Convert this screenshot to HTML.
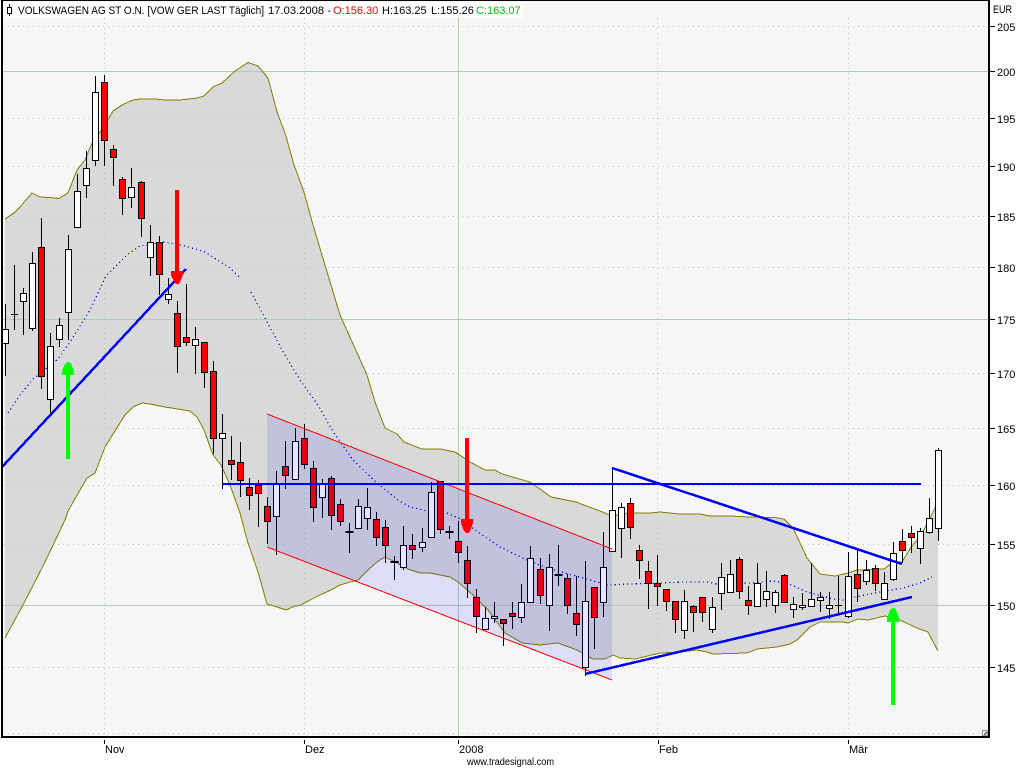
<!DOCTYPE html>
<html><head><meta charset="utf-8"><title>VOLKSWAGEN AG ST O.N.</title>
<style>
html,body{margin:0;padding:0;background:#fff;overflow:hidden}
svg{display:block}
text{font-family:"Liberation Sans",sans-serif;font-size:11px;fill:#000}
</style></head><body>
<svg width="1024" height="768" viewBox="0 0 1024 768" xmlns="http://www.w3.org/2000/svg">
<rect width="1024" height="768" fill="#fff"/>
<rect x="2" y="0" width="987" height="737" fill="#f6f6f6"/>

<!-- Bollinger fill -->
<path shape-rendering="crispEdges" fill="#d9d9d9" d="M5 219L14 213L20 207L32 193L40 197L50 197.500L59 198.500L68 193L77 170L85 160L92 143L104 127L113 111L122 105L133 100L140 99L155 99L165 100L180 100L197 98L204 96L213 87L222 83L235 71L248 62.500L258 66L268 78L277 112L285 133L294 165L304 192L313 225L322 255L331 285L340 315L349 335L358 355L367 375L375 402L385 428L397 434L404 442L422 449L440 449L455 452L470 462L485 470L495 470L502 474L530 482L540 489L551 497L576 502L600 511L612 516L630 513L650 513L660 512L680 514L700 514L710 516L730 516L750 517L775 517.500L784 519L793 528L807 558L820 574L835 576L848 573L857 570L884 569L893 562L902 562L911 547L920 537L929 520L935 508L938 505L938 651L928 632L917 628L900 620L885 616L868 620L858 619L848 623L843 622L820 622L810 627L797 640L790 644L777 647L757 649L747 653L713 654L707 652L697 650L680 652L660 653L635 659L620 658L613 655L605 659L593 659L577 650L558 643L540 645L522 643L505 633L488 610L473 595L458 582L450 577L430 573L420 573L408 569L397 563L385 557L377 562L368 570L358 580L350 582L340 585L331 590L320 595L310 600L300 605.500L295 606L286 610L277 607L267 604L258 572L248 543L240 513L230 485L221 465L213 455L204 430L197 417L190 411L165 407L150 404L142 403L133 407L125 415L105 447L95 473L87 478L80 490L68 511L65 520L43 566L23 605L5 638Z"/>

<!-- Grid -->
<g shape-rendering="crispEdges" fill="none">
<path stroke="#c4c9c4" stroke-dasharray="1 4" d="M3 26.500H988M3 118.500H988M3 166.500H988M3 216.500H988M3 267.500H988M3 373.500H988M3 428.500H988M3 485.500H988M3 544.500H988M3 667.500H988M3 733.500H988"/>
<path stroke="#aec4ae" stroke-dasharray="1 4" d="M104.500 18V736M304.500 18V736M657.500 18V736M848.500 18V736"/>
<path stroke="#b4c8b4" d="M3 71.500H988M3 319.500H988M3 605.500H988M458.500 18V736"/>
</g>

<!-- Bollinger lines -->
<g fill="none" stroke="#808000" stroke-width="1" shape-rendering="crispEdges">
<path d="M5 219L14 213L20 207L32 193L40 197L50 197.500L59 198.500L68 193L77 170L85 160L92 143L104 127L113 111L122 105L133 100L140 99L155 99L165 100L180 100L197 98L204 96L213 87L222 83L235 71L248 62.500L258 66L268 78L277 112L285 133L294 165L304 192L313 225L322 255L331 285L340 315L349 335L358 355L367 375L375 402L385 428L397 434L404 442L422 449L440 449L455 452L470 462L485 470L495 470L502 474L530 482L540 489L551 497L576 502L600 511L612 516L630 513L650 513L660 512L680 514L700 514L710 516L730 516L750 517L775 517.500L784 519L793 528L807 558L820 574L835 576L848 573L857 570L884 569L893 562L902 562L911 547L920 537L929 520L935 508L938 505"/>
<path d="M5 638L23 605L43 566L65 520L68 511L80 490L87 478L95 473L105 447L125 415L133 407L142 403L150 404L165 407L190 411L197 417L204 430L213 455L221 465L230 485L240 513L248 543L258 572L267 604L277 607L286 610L295 606L300 605.500L310 600L320 595L331 590L340 585L350 582L358 580L368 570L377 562L385 557L397 563L408 569L420 573L430 573L450 577L458 582L473 595L488 610L505 633L522 643L540 645L558 643L577 650L593 659L605 659L613 655L620 658L635 659L660 653L680 652L697 650L707 652L713 654L747 653L757 649L777 647L790 644L797 640L810 627L820 622L843 622L848 623L858 619L868 620L885 616L900 620L917 628L928 632L938 651"/>
</g>

<!-- Moving average dotted -->
<path shape-rendering="crispEdges" fill="none" stroke="#0000e0" stroke-width="1.200" stroke-dasharray="1.200 3" d="M8 413L20 395L33 379L58 359L70 342L90 310L106 276L127 255L140 246L165 242L185 246L205 252L230 268L241 279M251 292L266 320L285 355L300 380L318 405L332 430L353 460L377 483L398 500L410 507L427 511M447 513L463 520L475 530L500 547L527 560L547 568L583 578L608 585L630 584L660 583L683 582L707 582L717 584L750 583L773 581L787 583L807 592L833 599L843 600L855 597L880 592L903 588L920 583L932 577"/>

<!-- Candles -->
<g shape-rendering="crispEdges" stroke="#000" stroke-width="1">
<path fill="none" d="M5.500 304V376M14.500 265V330M23.500 288V335M32.500 252V331M41.500 218V389M50.500 333V414M59.500 318V347M68.500 235V340M77.500 174V227M86.500 151V198M95.500 76V166M104.500 75V166M113.500 145V186M122.500 177V215M131.500 168V208M141.500 181V237M150.500 225V276M159.500 236V295M168.500 278V304M177.500 301V373M186.500 284V346M195.500 327V374M204.500 342V388M213.500 361V454M222.500 414V489M231.500 436V480M240.500 442V497M249.500 478V510M258.500 480V527M267.500 497V544M276.500 471V555M285.500 441V489M295.500 428V479M304.500 424V469M313.500 461V522M322.500 479V518M331.500 476V530M340.500 499V526M349.500 523V553M358.500 499V529M367.500 488V530M376.500 512V546M385.500 520V563M394.500 556V580M403.500 526V570M412.500 534V559M422.500 528V552M431.500 482V537M440.500 481V534M449.500 526V539M458.500 521V563M467.500 546V598M476.500 589V633M485.500 607V630M494.500 602V623M503.500 619V646M512.500 602V629M521.500 584V623M530.500 546V602M540.500 558V604M549.500 554V631M558.500 545V586M567.500 574V614M576.500 576V636M585.500 561V676M594.500 587V649M603.500 532V617M612.500 467V551M621.500 503V558M630.500 498V539M639.500 545V579M648.500 561V609M657.500 555V606M666.500 589V611M675.500 601V633M684.500 590V639M693.500 605V632M702.500 597V622M712.500 597V633M721.500 563V610M730.500 560V592M739.500 557V599M748.500 586V615M757.500 563V607M766.500 571V607M775.500 590V613M784.500 574V603M793.500 597V618M802.500 593V610M811.500 563V606M820.500 592V612M829.500 592V619M838.500 576V615M848.500 552V618M857.500 550V602M866.500 560V585M875.500 565V591M884.500 572V599M893.500 542V581M902.500 529V563M911.500 526V553M920.500 528V564M929.500 498V534M938.500 448V541"/>
<path fill="none" d="M11 314.500H18M835 605.500H842"/>
<path fill="#000" d="M346 531.500h7v1h-7zM391 561.500h7v1h-7zM446 531.500h7v1h-7zM555 574.500h7v1h-7z"/>
<path fill="#fff" d="M2.500 329.500h6v14h-6zM20.500 293.500h6v8h-6zM29.500 263.500h6v65h-6zM47.500 346.500h6v53h-6zM56.500 325.500h6v14h-6zM65.500 249.500h6v63h-6zM74.500 191.500h6v36h-6zM83.500 168.500h6v17h-6zM92.500 92.500h6v68h-6zM128.500 187.500h6v10h-6zM147.500 242.500h6v15h-6zM165.500 294.500h6v5h-6zM192.500 339.500h6v6h-6zM219.500 433.500h6v5h-6zM273.500 484.500h6v32h-6zM292.500 441.500h6v38h-6zM319.500 483.500h6v14h-6zM355.500 506.500h6v22h-6zM364.500 507.500h6v11h-6zM400.500 545.500h6v22h-6zM419.500 542.500h6v5h-6zM428.500 492.500h6v45h-6zM482.500 618.500h6v11h-6zM491.500 616.500h6v2h-6zM518.500 602.500h6v15h-6zM527.500 558.500h6v44h-6zM546.500 567.500h6v38h-6zM582.500 601.500h6v66h-6zM600.500 567.500h6v35h-6zM609.500 510.500h6v41h-6zM618.500 507.500h6v21h-6zM681.500 601.500h6v29h-6zM709.500 607.500h6v22h-6zM718.500 577.500h6v16h-6zM727.500 574.500h6v18h-6zM754.500 583.500h6v23h-6zM763.500 591.500h6v8h-6zM772.500 592.500h6v13h-6zM790.500 604.500h6v5h-6zM799.500 605.500h6v2h-6zM808.500 599.500h6v7h-6zM817.500 597.500h6v3h-6zM826.500 605.500h6v3h-6zM845.500 576.500h6v40h-6zM863.500 570.500h6v11h-6zM881.500 583.500h6v16h-6zM890.500 553.500h6v26h-6zM917.500 531.500h6v17h-6zM926.500 518.500h6v14h-6zM935.500 450.500h6v78h-6z"/>
<path fill="#ff0000" d="M38.500 247.500h6v129h-6zM101.500 82.500h6v58h-6zM110.500 149.500h6v8h-6zM119.500 179.500h6v19h-6zM138.500 182.500h6v36h-6zM156.500 242.500h6v32h-6zM174.500 313.500h6v33h-6zM183.500 337.500h6v5h-6zM201.500 342.500h6v30h-6zM210.500 371.500h6v67h-6zM228.500 460.500h6v4h-6zM237.500 462.500h6v18h-6zM246.500 487.500h6v8h-6zM255.500 485.500h6v8h-6zM264.500 506.500h6v15h-6zM282.500 466.500h6v9h-6zM301.500 438.500h6v26h-6zM310.500 468.500h6v39h-6zM328.500 478.500h6v37h-6zM337.500 504.500h6v17h-6zM373.500 519.500h6v18h-6zM382.500 527.500h6v18h-6zM409.500 545.500h6v4h-6zM437.500 481.500h6v48h-6zM455.500 541.500h6v11h-6zM464.500 560.500h6v23h-6zM473.500 597.500h6v19h-6zM500.500 619.500h6v4h-6zM509.500 613.500h6v3h-6zM537.500 569.500h6v26h-6zM564.500 578.500h6v27h-6zM573.500 613.500h6v11h-6zM591.500 587.500h6v30h-6zM627.500 503.500h6v24h-6zM636.500 550.500h6v10h-6zM645.500 571.500h6v12h-6zM654.500 583.500h6v3h-6zM663.500 589.500h6v12h-6zM672.500 601.500h6v18h-6zM690.500 606.500h6v6h-6zM699.500 597.500h6v15h-6zM736.500 559.500h6v32h-6zM745.500 600.500h6v5h-6zM781.500 575.500h6v27h-6zM854.500 574.500h6v14h-6zM872.500 568.500h6v15h-6zM899.500 541.500h6v9h-6zM908.500 533.500h6v4h-6z"/>
</g>

<!-- Regression channel -->
<path shape-rendering="crispEdges" fill="#0000ff" fill-opacity=".1" d="M267 414L612 549V680L267 547Z"/>
<path shape-rendering="crispEdges" fill="none" stroke="#ff0000" stroke-width="1" d="M267 414L612 549M267 547L612 680"/>

<!-- Blue lines -->
<g fill="none" stroke="#0000ff" stroke-width="2.500" shape-rendering="crispEdges">
<path d="M2 467L186 269"/>
<path d="M222 484H921" stroke-width="2"/>
<path d="M612 468L902 564"/>
<path d="M585 674L912 597"/>
</g>

<!-- Arrows -->
<g shape-rendering="crispEdges">
<path fill="#ff0000" d="M175 190h4v81h4v4l-3 7l-2 2h-2l-2-2l-3-7v-4h4z"/>
<path fill="#ff0000" d="M465 438h4v81h4v4l-3 8l-2 2h-2l-2-2l-3-8v-4h4z"/>
<path fill="#00ff00" d="M66 459h4v-84h4v-4l-3-7l-2-2h-2l-2 2l-3 7v4h4z"/>
<path fill="#00ff00" d="M891 705h4v-83h4v-4l-3-8l-2-2h-2l-2 2l-3 8v4h4z"/>
</g>

<!-- Title -->
<rect x="3" y="2" width="520" height="16" fill="#fff"/>
<g shape-rendering="crispEdges">
<path stroke="#000" fill="#fff" d="M7.500 7.500h4v6h-4z"/>
<path stroke="#000" fill="none" d="M9.500 4V7.500M9.500 13.500V16"/>
</g>
<text x="18" y="14" textLength="246" lengthAdjust="spacingAndGlyphs">VOLKSWAGEN AG ST O.N. [VOW GER LAST Täglich]</text>
<text x="268" y="14" textLength="63" lengthAdjust="spacingAndGlyphs">17.03.2008 -</text>
<text x="333" y="14" style="fill:#ff0000">O:156.30</text>
<text x="382" y="14">H:163.25</text>
<text x="431" y="14">L:155.26</text>
<text x="476" y="14" style="fill:#00c000">C:163.07</text>

<!-- Frame -->
<g shape-rendering="crispEdges" fill="#000">
<rect x="1" y="0" width="988" height="1"/>
<rect x="1" y="0" width="2" height="738"/>
<rect x="988" y="0" width="2" height="738"/>
<rect x="1" y="736" width="989" height="2"/>
</g>
<g shape-rendering="crispEdges">
<rect x="982.500" y="730.500" width="5" height="5" fill="#e8e8e8" stroke="#999"/>
<path stroke="#444" fill="none" d="M984 735L987 732"/>
<path stroke="#000" fill="none" d="M990 26.500H995M990 71.500H995M990 118.500H995M990 166.500H995M990 216.500H995M990 267.500H995M990 319.500H995M990 373.500H995M990 428.500H995M990 485.500H995M990 544.500H995M990 605.500H995M990 667.500H995M104.500 740V744M304.500 740V744M458.500 740V744M658.500 740V744M848.500 740V744"/>
</g>

<!-- Axis labels -->
<text x="993" y="13" textLength="19" lengthAdjust="spacingAndGlyphs">EUR</text>
<text x="997" y="31">205</text>
<text x="997" y="76">200</text>
<text x="997" y="123">195</text>
<text x="997" y="171">190</text>
<text x="997" y="221">185</text>
<text x="997" y="272">180</text>
<text x="997" y="324">175</text>
<text x="997" y="378">170</text>
<text x="997" y="433">165</text>
<text x="997" y="490">160</text>
<text x="997" y="549">155</text>
<text x="997" y="610">150</text>
<text x="997" y="672">145</text>
<text x="105" y="753">Nov</text>
<text x="305" y="753">Dez</text>
<text x="459" y="753">2008</text>
<text x="659" y="753">Feb</text>
<text x="849" y="753">Mär</text>
<text x="467" y="765" style="font-size:10px" textLength="87" lengthAdjust="spacingAndGlyphs">www.tradesignal.com</text>
</svg>
</body></html>
